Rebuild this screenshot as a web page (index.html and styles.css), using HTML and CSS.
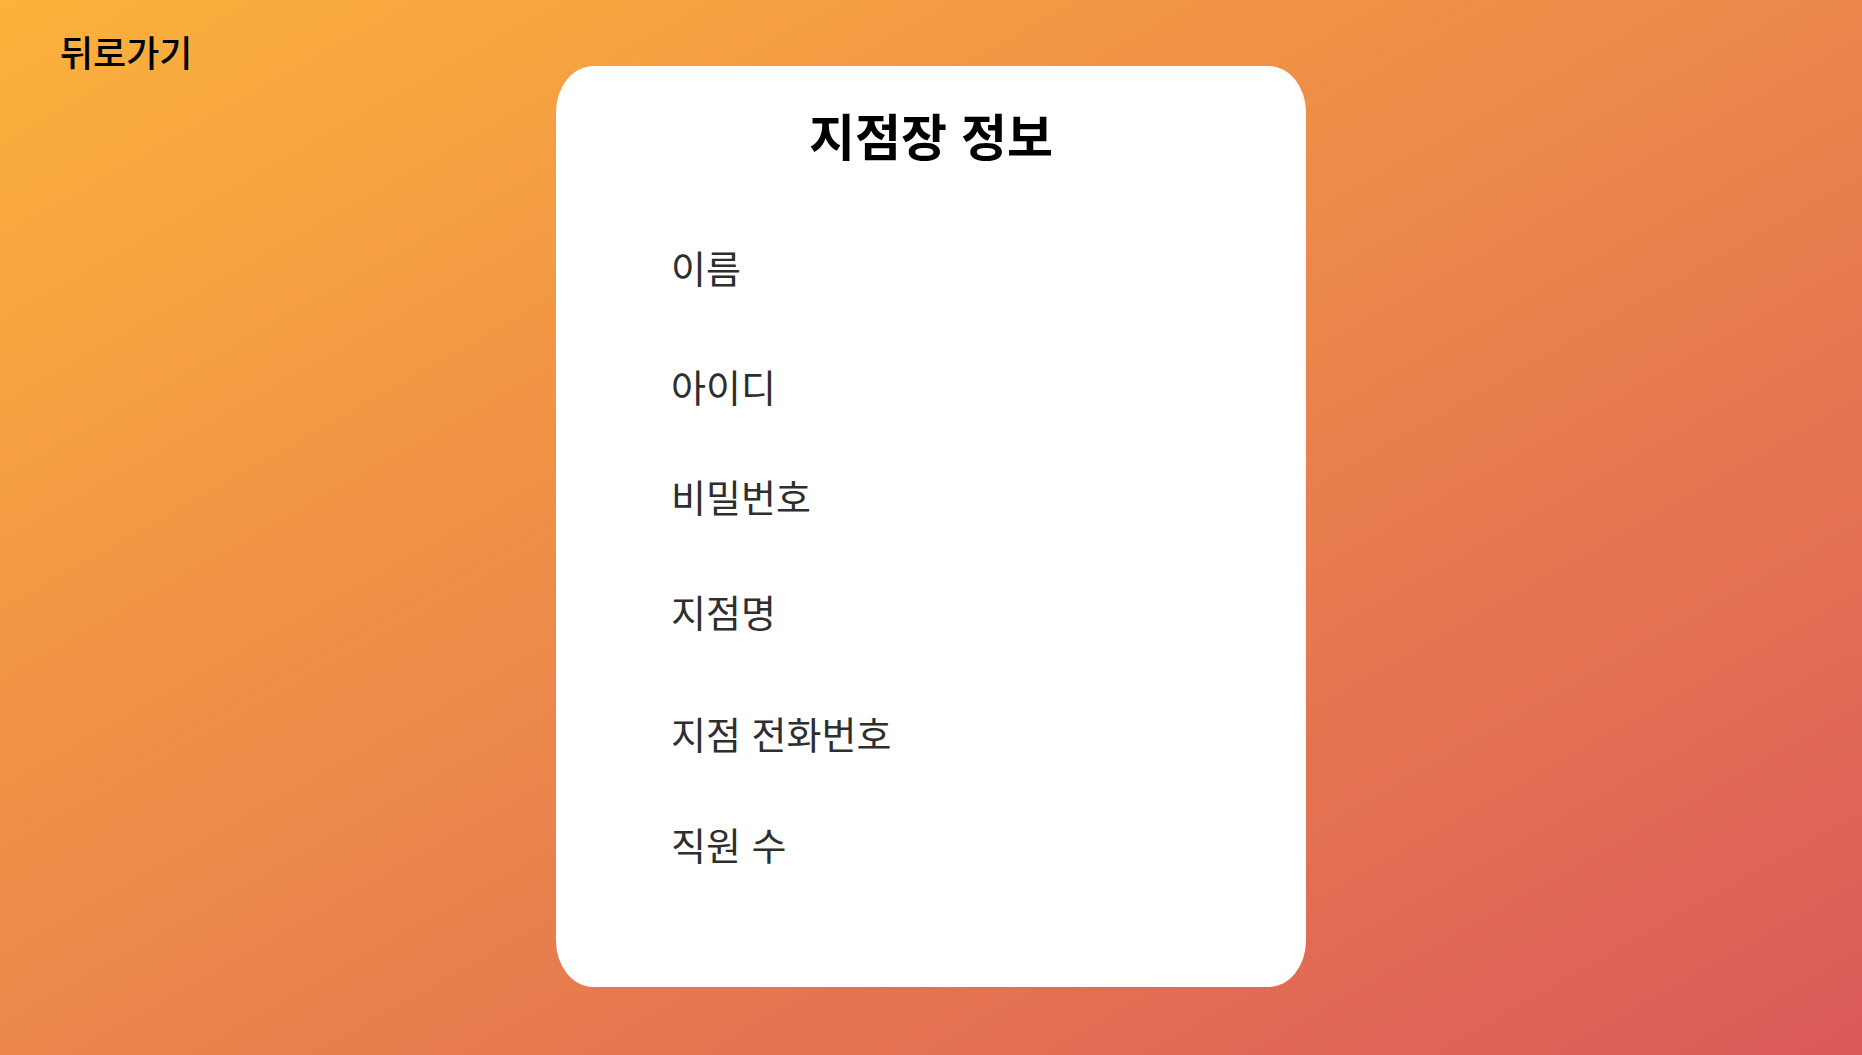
FILE: index.html
```html
<!DOCTYPE html>
<html lang="ko">
<head>
<meta charset="utf-8">
<title>지점장 정보</title>
<link rel="stylesheet" href="styles.css">
</head>
<body>
<div class="page">
  <div class="side">
    <a class="back" href="#">뒤로가기</a>
  </div>
  <main class="card">
    <h1 class="title">지점장 정보</h1>
    <ul class="fields">
      <li class="field field--a">이름</li>
      <li class="field field--b">아이디</li>
      <li class="field field--c">비밀번호</li>
      <li class="field field--d">지점명</li>
      <li class="field field--e">지점 전화번호</li>
      <li class="field field--f">직원 수</li>
    </ul>
  </main>
  <div class="side"></div>
</div>
</body>
</html>
```

FILE: styles.css
```css
* {
  box-sizing: border-box;
}

html, body {
  margin: 0;
  padding: 0;
}

body {
  font-family: "Noto Sans CJK KR", "Noto Sans", sans-serif;
  background: linear-gradient(to bottom right, #fcb23b, #da5a5a);
  min-height: 100vh;
}

.page {
  display: grid;
  grid-template-columns: 1fr 750px 1fr;
  min-height: 100vh;
  align-items: start;
}

.side {
  padding: 33px 0 0 60px;
}

.back {
  display: inline-block;
  font-size: 36px;
  line-height: 1;
  color: #000;
  text-decoration: none;
  font-weight: 500;
}

.card {
  margin-top: 66px;
  height: 921px;
  background: #fff;
  border-radius: 5%;
  padding: 43px 0 0 115px;
}

.title {
  margin: 0 0 0 -115px;
  font-size: 50px;
  line-height: 1;
  font-weight: 700;
  text-align: center;
  color: #000;
}

.fields {
  list-style: none;
  margin: 89px 0 0;
  padding: 0;
}

.field {
  font-size: 38px;
  line-height: 1;
  color: #2e2e2e;
  height: 115px;
}

.field--a { height: 119px; }
.field--b { height: 110px; }
.field--c { height: 115px; }
.field--d { height: 122px; }
.field--e { height: 111px; }
.field--f { height: 38px; }
```
